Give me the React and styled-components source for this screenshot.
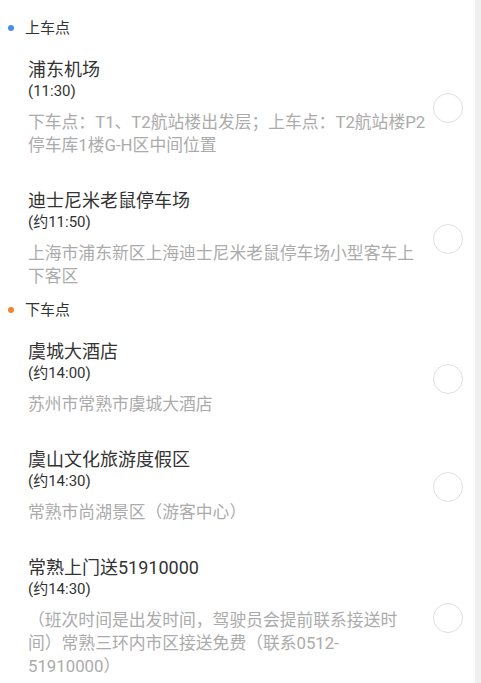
import React from "react";
import styled, { createGlobalStyle } from "styled-components";

const Global = createGlobalStyle`
  html, body { margin: 0; padding: 0; background: #fff; }
  body { font-family: "Roboto", "Noto Sans CJK SC", sans-serif; }
  * { box-sizing: border-box; }
`;

const Page = styled.div`
  display: grid;
  grid-template-columns: 1fr 6px;
  width: 481px;
  min-height: 683px;
  background: #fff;
`;

const Main = styled.div`
  padding-top: 18px;
`;

const Strip = styled.div`
  background: #f0f0f0;
`;

const SectionHeader = styled.div`
  display: flex;
  align-items: center;
  gap: 11px;
  padding-left: 8px;
  height: 20px;
  font-size: 15px;
  line-height: 20px;
  color: #333;
`;

const Dot = styled.span`
  width: 6px;
  height: 6px;
  border-radius: 50%;
  background: ${(p) => p.$color};
`;

const Item = styled.div`
  display: flex;
  align-items: center;
  gap: 5px;
  padding: 21px 12px 12px 28px;
`;

const Info = styled.div`
  flex: 1;
  min-width: 0;
`;

const Title = styled.div`
  font-size: 18px;
  line-height: 22px;
  color: #333;
`;

const Time = styled.div`
  font-size: 15px;
  line-height: 20px;
  color: #333;
`;

const Desc = styled.div`
  margin-top: 10px;
  font-size: 16.8px;
  line-height: 23px;
  color: #ababab;
  line-break: strict;
  text-spacing-trim: space-all;
`;

const Radio = styled.span`
  flex: none;
  width: 30px;
  height: 30px;
  border-radius: 50%;
  border: 1px solid #dedede;
  background: #fff;
`;

const sections = [
  {
    name: "上车点",
    color: "#4a90e2",
    items: [
      {
        title: "浦东机场",
        time: "(11:30)",
        desc: "下车点：T1、T2航站楼出发层；上车点：T2航站楼P2停车库1楼G-H区中间位置",
      },
      {
        title: "迪士尼米老鼠停车场",
        time: "(约11:50)",
        desc: "上海市浦东新区上海迪士尼米老鼠停车场小型客车上下客区",
      },
    ],
  },
  {
    name: "下车点",
    color: "#f5822e",
    items: [
      { title: "虞城大酒店", time: "(约14:00)", desc: "苏州市常熟市虞城大酒店" },
      { title: "虞山文化旅游度假区", time: "(约14:30)", desc: "常熟市尚湖景区（游客中心）" },
      {
        title: "常熟上门送51910000",
        time: "(约14:30)",
        desc: "（班次时间是出发时间，驾驶员会提前联系接送时间）常熟三环内市区接送免费（联系0512-51910000）",
      },
    ],
  },
];

export default function App() {
  return (
    <>
      <Global />
      <Page>
        <Main>
          {sections.map((s) => (
            <section key={s.name}>
              <SectionHeader>
                <Dot $color={s.color} />
                {s.name}
              </SectionHeader>
              {s.items.map((it) => (
                <Item key={it.title}>
                  <Info>
                    <Title>{it.title}</Title>
                    <Time>{it.time}</Time>
                    <Desc>{it.desc}</Desc>
                  </Info>
                  <Radio />
                </Item>
              ))}
            </section>
          ))}
        </Main>
        <Strip />
      </Page>
    </>
  );
}
